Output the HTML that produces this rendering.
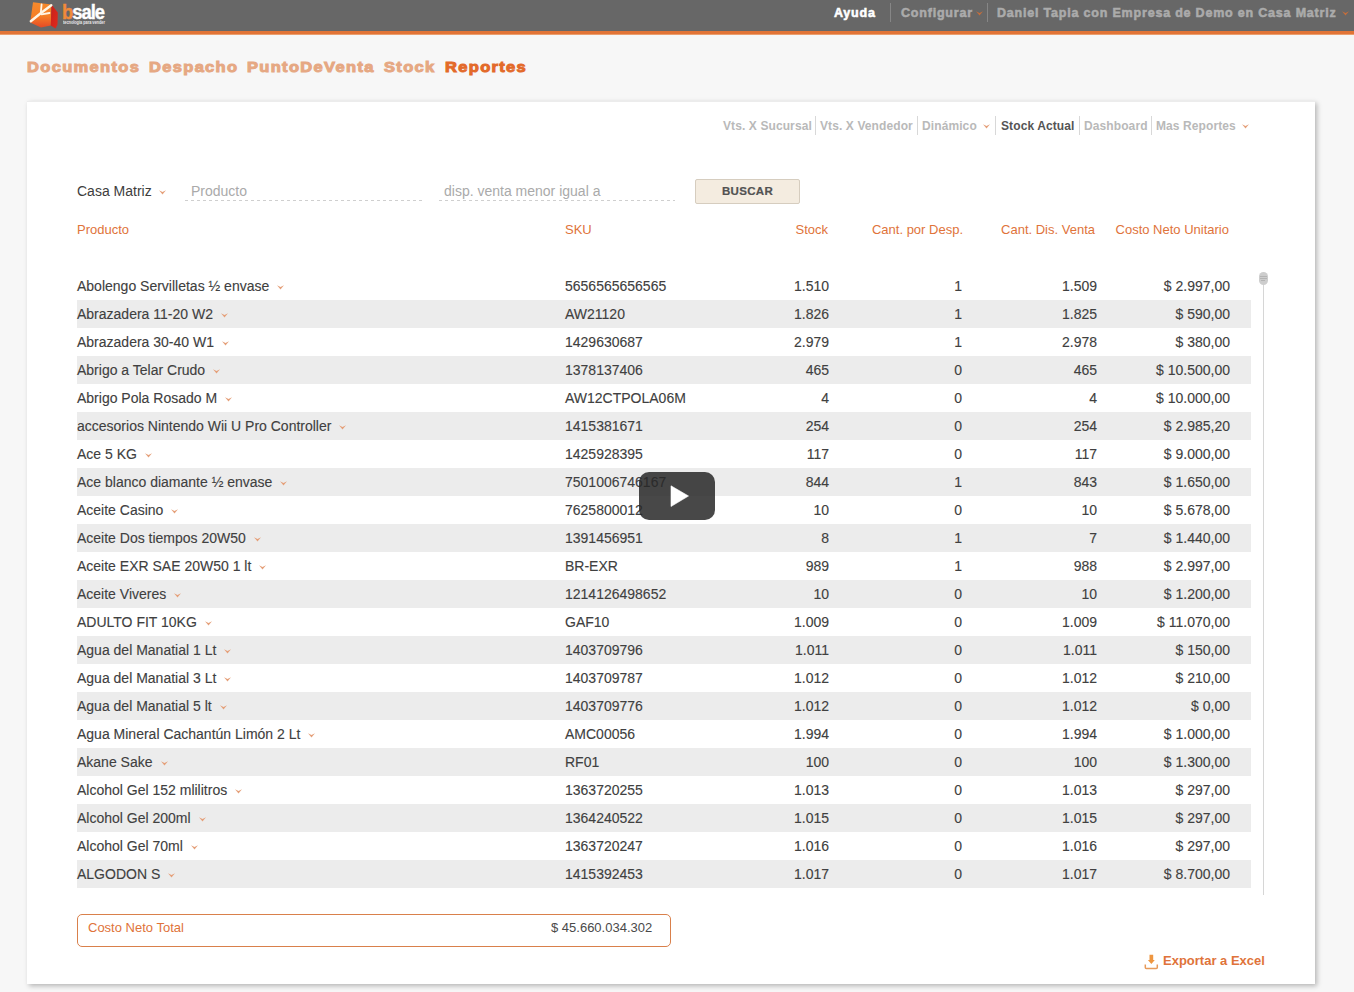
<!DOCTYPE html>
<html><head><meta charset="utf-8">
<style>
*{margin:0;padding:0;box-sizing:border-box}
html,body{width:1354px;height:992px;overflow:hidden}
body{background:#f7f7f7;font-family:"Liberation Sans",sans-serif;position:relative;color:#333}
.abs{position:absolute;white-space:nowrap}
.hdr{position:absolute;left:0;top:0;width:1354px;height:31px;background:#676767}
.hline{position:absolute;left:0;top:31px;width:1354px;height:4px;background:linear-gradient(#e27436 0,#e27436 75%,#f3c8a8 100%)}
.topnav{position:absolute;top:5.8px;font-weight:bold;font-size:12.5px;color:#ababab;white-space:nowrap;letter-spacing:0.8px;-webkit-text-stroke:0.55px currentColor}
.sep{position:absolute;top:3px;width:1px;height:19px;background:#868686}
.mn{position:absolute;top:57.8px;font-weight:bold;font-size:15px;color:#e6a883;white-space:nowrap;letter-spacing:1.2px;-webkit-text-stroke:1px currentColor;transform:scaleX(1.1);transform-origin:0 0}
.card{position:absolute;left:27px;top:101px;width:1288px;height:883px;background:#fff;box-shadow:2px 2px 5px rgba(0,0,0,0.27);border-top:1px solid #ececec}
.sub{position:absolute;top:119px;font-size:12px;font-weight:bold;color:#b9b9b9;white-space:nowrap;letter-spacing:0.1px}
.ssep{position:absolute;top:116px;width:1px;height:19px;background:#d8d8d8}
.row{position:absolute;left:77px;width:1174px;height:28px;font-size:14px;color:#404040;-webkit-text-stroke:0.12px #404040}
.row.g{background:#ececec}
.row span{position:absolute;top:6px;white-space:nowrap}
.c1{left:0}
.c2{left:488px}
.c3{right:422px}
.c4{right:289px}
.c5{right:154px}
.c6{right:21px}
.cv{margin-left:8px;vertical-align:middle}
.th{position:absolute;top:222px;font-size:13px;color:#e0733a;white-space:nowrap}
.dash{position:absolute;height:1px;background:repeating-linear-gradient(90deg,#cfcfcf 0,#cfcfcf 3px,transparent 3px,transparent 6px)}
</style></head><body>
<div class="hdr"></div><div class="hline"></div>
<!-- logo -->
<svg class="abs" style="left:28px;top:0px" width="32" height="31" viewBox="28 0 32 31">
<defs><linearGradient id="lg1" x1="0" y1="0" x2="0" y2="1"><stop offset="0" stop-color="#f68a2c"/><stop offset="0.55" stop-color="#f57e26"/><stop offset="1" stop-color="#e44a26"/></linearGradient>
<linearGradient id="lg2" x1="0" y1="0" x2="1" y2="1"><stop offset="0" stop-color="#c8201a"/><stop offset="1" stop-color="#e02a1c"/></linearGradient></defs>
<polygon points="33,2.2 51.5,4.5 50.8,25.5 41,27.5 30.2,22.5" fill="url(#lg1)"/>
<polygon points="51.5,4.5 57.8,12.5 57.5,24.5 55.5,28.5 50.8,25.5" fill="url(#lg2)"/>
<path d="M30.8 21.2 L41 13 L51.3 5.2" stroke="#fff6e6" stroke-width="2.4" fill="none" stroke-linecap="round"/>
<path d="M40.8 13 L41.6 4.3 M41.5 14.3 L49.5 13" stroke="#fff6e6" stroke-width="1.8" fill="none" stroke-linecap="round"/>
</svg>
<div class="abs" style="left:62px;top:0.5px;font-size:20px;font-weight:bold;letter-spacing:-1.1px;color:#fff;transform:scaleX(0.92);transform-origin:0 0;-webkit-text-stroke:0.4px currentColor"><span style="color:#f08a3a">b</span>sale</div>
<div class="abs" style="left:63px;top:20.3px;font-size:4.5px;color:#e8e8e8;letter-spacing:-0.05px;font-weight:bold;transform:scaleX(0.87);transform-origin:0 0">tecnologia para vender</div>

<div class="topnav" style="left:834px;color:#fff">Ayuda</div>
<div class="sep" style="left:890px"></div>
<div class="topnav" style="left:901px">Configurar</div>
<svg class="abs" style="left:976px;top:11px" width="7" height="5" viewBox="0 0 7 5"><path d="M0 0.3 L3.5 2 L7 0.3 L3.5 4.5 Z" fill="#c26d3c"/></svg>
<div class="sep" style="left:987px"></div>
<div class="topnav" style="left:997px">Daniel Tapia con Empresa de Demo en Casa Matriz</div>
<svg class="abs" style="left:1342px;top:11px" width="7" height="5" viewBox="0 0 7 5"><path d="M0 0.3 L3.5 2 L7 0.3 L3.5 4.5 Z" fill="#c26d3c"/></svg>

<div class="mn" style="left:27px">Documentos</div>
<div class="mn" style="left:149px">Despacho</div>
<div class="mn" style="left:247px">PuntoDeVenta</div>
<div class="mn" style="left:384px">Stock</div>
<div class="mn" style="left:445px;color:#e36a2a">Reportes</div>

<div class="card"></div>
<div class="sub" style="left:723px">Vts. X Sucursal</div>
<div class="ssep" style="left:815px"></div>
<div class="sub" style="left:820px">Vts. X Vendedor</div>
<div class="ssep" style="left:917px"></div>
<div class="sub" style="left:922px">Dinámico</div>
<svg class="abs" style="left:983px;top:124px" width="7" height="5" viewBox="0 0 7 5"><path d="M0 0.3 L3.5 2 L7 0.3 L3.5 4.5 Z" fill="#e5a07a"/></svg>
<div class="ssep" style="left:995px"></div>
<div class="sub" style="left:1001px;color:#555">Stock Actual</div>
<div class="ssep" style="left:1079px"></div>
<div class="sub" style="left:1084px">Dashboard</div>
<div class="ssep" style="left:1151px"></div>
<div class="sub" style="left:1156px">Mas Reportes</div>
<svg class="abs" style="left:1242px;top:124px" width="7" height="5" viewBox="0 0 7 5"><path d="M0 0.3 L3.5 2 L7 0.3 L3.5 4.5 Z" fill="#e5a07a"/></svg>

<div class="abs" style="left:77px;top:183px;font-size:14px;color:#3d3d3d">Casa Matriz</div>
<svg class="abs" style="left:159px;top:190px" width="7" height="5" viewBox="0 0 7 5"><path d="M0 0.3 L3.5 2 L7 0.3 L3.5 4.5 Z" fill="#e5a07a"/></svg>
<div class="abs" style="left:191px;top:183px;font-size:14px;color:#aaa">Producto</div>
<div class="dash" style="left:185px;top:200px;width:238px"></div>
<div class="abs" style="left:444px;top:183px;font-size:14px;color:#aaa">disp. venta menor igual a</div>
<div class="dash" style="left:439px;top:200px;width:236px"></div>
<div class="abs" style="left:695px;top:179px;width:105px;height:25px;background:#f4ece0;border:1px solid #d6cdbf;border-radius:2px;font-size:11.5px;font-weight:bold;color:#525252;text-align:center;line-height:23px;letter-spacing:0.3px;-webkit-text-stroke:0.2px currentColor">BUSCAR</div>

<div class="th" style="left:77px">Producto</div>
<div class="th" style="left:565px">SKU</div>
<div class="th" style="right:526px">Stock</div>
<div class="th" style="right:391px">Cant. por Desp.</div>
<div class="th" style="right:259px">Cant. Dis. Venta</div>
<div class="th" style="right:125px">Costo Neto Unitario</div>
<div class="row" style="top:272px"><span class="c1">Abolengo Servilletas ½ envase<svg class="cv" width="7" height="5" viewBox="0 0 7 5"><path d="M0 0.3 L3.5 2 L7 0.3 L3.5 4.5 Z" fill="#e5a07a"/></svg></span><span class="c2">5656565656565</span><span class="c3">1.510</span><span class="c4">1</span><span class="c5">1.509</span><span class="c6">$ 2.997,00</span></div>
<div class="row g" style="top:300px"><span class="c1">Abrazadera 11-20 W2<svg class="cv" width="7" height="5" viewBox="0 0 7 5"><path d="M0 0.3 L3.5 2 L7 0.3 L3.5 4.5 Z" fill="#e5a07a"/></svg></span><span class="c2">AW21120</span><span class="c3">1.826</span><span class="c4">1</span><span class="c5">1.825</span><span class="c6">$ 590,00</span></div>
<div class="row" style="top:328px"><span class="c1">Abrazadera 30-40 W1<svg class="cv" width="7" height="5" viewBox="0 0 7 5"><path d="M0 0.3 L3.5 2 L7 0.3 L3.5 4.5 Z" fill="#e5a07a"/></svg></span><span class="c2">1429630687</span><span class="c3">2.979</span><span class="c4">1</span><span class="c5">2.978</span><span class="c6">$ 380,00</span></div>
<div class="row g" style="top:356px"><span class="c1">Abrigo a Telar Crudo<svg class="cv" width="7" height="5" viewBox="0 0 7 5"><path d="M0 0.3 L3.5 2 L7 0.3 L3.5 4.5 Z" fill="#e5a07a"/></svg></span><span class="c2">1378137406</span><span class="c3">465</span><span class="c4">0</span><span class="c5">465</span><span class="c6">$ 10.500,00</span></div>
<div class="row" style="top:384px"><span class="c1">Abrigo Pola Rosado M<svg class="cv" width="7" height="5" viewBox="0 0 7 5"><path d="M0 0.3 L3.5 2 L7 0.3 L3.5 4.5 Z" fill="#e5a07a"/></svg></span><span class="c2">AW12CTPOLA06M</span><span class="c3">4</span><span class="c4">0</span><span class="c5">4</span><span class="c6">$ 10.000,00</span></div>
<div class="row g" style="top:412px"><span class="c1">accesorios Nintendo Wii U Pro Controller<svg class="cv" width="7" height="5" viewBox="0 0 7 5"><path d="M0 0.3 L3.5 2 L7 0.3 L3.5 4.5 Z" fill="#e5a07a"/></svg></span><span class="c2">1415381671</span><span class="c3">254</span><span class="c4">0</span><span class="c5">254</span><span class="c6">$ 2.985,20</span></div>
<div class="row" style="top:440px"><span class="c1">Ace 5 KG<svg class="cv" width="7" height="5" viewBox="0 0 7 5"><path d="M0 0.3 L3.5 2 L7 0.3 L3.5 4.5 Z" fill="#e5a07a"/></svg></span><span class="c2">1425928395</span><span class="c3">117</span><span class="c4">0</span><span class="c5">117</span><span class="c6">$ 9.000,00</span></div>
<div class="row g" style="top:468px"><span class="c1">Ace blanco diamante ½ envase<svg class="cv" width="7" height="5" viewBox="0 0 7 5"><path d="M0 0.3 L3.5 2 L7 0.3 L3.5 4.5 Z" fill="#e5a07a"/></svg></span><span class="c2">7501006746167</span><span class="c3">844</span><span class="c4">1</span><span class="c5">843</span><span class="c6">$ 1.650,00</span></div>
<div class="row" style="top:496px"><span class="c1">Aceite Casino<svg class="cv" width="7" height="5" viewBox="0 0 7 5"><path d="M0 0.3 L3.5 2 L7 0.3 L3.5 4.5 Z" fill="#e5a07a"/></svg></span><span class="c2">7625800012</span><span class="c3">10</span><span class="c4">0</span><span class="c5">10</span><span class="c6">$ 5.678,00</span></div>
<div class="row g" style="top:524px"><span class="c1">Aceite Dos tiempos 20W50<svg class="cv" width="7" height="5" viewBox="0 0 7 5"><path d="M0 0.3 L3.5 2 L7 0.3 L3.5 4.5 Z" fill="#e5a07a"/></svg></span><span class="c2">1391456951</span><span class="c3">8</span><span class="c4">1</span><span class="c5">7</span><span class="c6">$ 1.440,00</span></div>
<div class="row" style="top:552px"><span class="c1">Aceite EXR SAE 20W50 1 lt<svg class="cv" width="7" height="5" viewBox="0 0 7 5"><path d="M0 0.3 L3.5 2 L7 0.3 L3.5 4.5 Z" fill="#e5a07a"/></svg></span><span class="c2">BR-EXR</span><span class="c3">989</span><span class="c4">1</span><span class="c5">988</span><span class="c6">$ 2.997,00</span></div>
<div class="row g" style="top:580px"><span class="c1">Aceite Viveres<svg class="cv" width="7" height="5" viewBox="0 0 7 5"><path d="M0 0.3 L3.5 2 L7 0.3 L3.5 4.5 Z" fill="#e5a07a"/></svg></span><span class="c2">1214126498652</span><span class="c3">10</span><span class="c4">0</span><span class="c5">10</span><span class="c6">$ 1.200,00</span></div>
<div class="row" style="top:608px"><span class="c1">ADULTO FIT 10KG<svg class="cv" width="7" height="5" viewBox="0 0 7 5"><path d="M0 0.3 L3.5 2 L7 0.3 L3.5 4.5 Z" fill="#e5a07a"/></svg></span><span class="c2">GAF10</span><span class="c3">1.009</span><span class="c4">0</span><span class="c5">1.009</span><span class="c6">$ 11.070,00</span></div>
<div class="row g" style="top:636px"><span class="c1">Agua del Manatial 1 Lt<svg class="cv" width="7" height="5" viewBox="0 0 7 5"><path d="M0 0.3 L3.5 2 L7 0.3 L3.5 4.5 Z" fill="#e5a07a"/></svg></span><span class="c2">1403709796</span><span class="c3">1.011</span><span class="c4">0</span><span class="c5">1.011</span><span class="c6">$ 150,00</span></div>
<div class="row" style="top:664px"><span class="c1">Agua del Manatial 3 Lt<svg class="cv" width="7" height="5" viewBox="0 0 7 5"><path d="M0 0.3 L3.5 2 L7 0.3 L3.5 4.5 Z" fill="#e5a07a"/></svg></span><span class="c2">1403709787</span><span class="c3">1.012</span><span class="c4">0</span><span class="c5">1.012</span><span class="c6">$ 210,00</span></div>
<div class="row g" style="top:692px"><span class="c1">Agua del Manatial 5 lt<svg class="cv" width="7" height="5" viewBox="0 0 7 5"><path d="M0 0.3 L3.5 2 L7 0.3 L3.5 4.5 Z" fill="#e5a07a"/></svg></span><span class="c2">1403709776</span><span class="c3">1.012</span><span class="c4">0</span><span class="c5">1.012</span><span class="c6">$ 0,00</span></div>
<div class="row" style="top:720px"><span class="c1">Agua Mineral Cachantún Limón 2 Lt<svg class="cv" width="7" height="5" viewBox="0 0 7 5"><path d="M0 0.3 L3.5 2 L7 0.3 L3.5 4.5 Z" fill="#e5a07a"/></svg></span><span class="c2">AMC00056</span><span class="c3">1.994</span><span class="c4">0</span><span class="c5">1.994</span><span class="c6">$ 1.000,00</span></div>
<div class="row g" style="top:748px"><span class="c1">Akane Sake<svg class="cv" width="7" height="5" viewBox="0 0 7 5"><path d="M0 0.3 L3.5 2 L7 0.3 L3.5 4.5 Z" fill="#e5a07a"/></svg></span><span class="c2">RF01</span><span class="c3">100</span><span class="c4">0</span><span class="c5">100</span><span class="c6">$ 1.300,00</span></div>
<div class="row" style="top:776px"><span class="c1">Alcohol Gel 152 mlilitros<svg class="cv" width="7" height="5" viewBox="0 0 7 5"><path d="M0 0.3 L3.5 2 L7 0.3 L3.5 4.5 Z" fill="#e5a07a"/></svg></span><span class="c2">1363720255</span><span class="c3">1.013</span><span class="c4">0</span><span class="c5">1.013</span><span class="c6">$ 297,00</span></div>
<div class="row g" style="top:804px"><span class="c1">Alcohol Gel 200ml<svg class="cv" width="7" height="5" viewBox="0 0 7 5"><path d="M0 0.3 L3.5 2 L7 0.3 L3.5 4.5 Z" fill="#e5a07a"/></svg></span><span class="c2">1364240522</span><span class="c3">1.015</span><span class="c4">0</span><span class="c5">1.015</span><span class="c6">$ 297,00</span></div>
<div class="row" style="top:832px"><span class="c1">Alcohol Gel 70ml<svg class="cv" width="7" height="5" viewBox="0 0 7 5"><path d="M0 0.3 L3.5 2 L7 0.3 L3.5 4.5 Z" fill="#e5a07a"/></svg></span><span class="c2">1363720247</span><span class="c3">1.016</span><span class="c4">0</span><span class="c5">1.016</span><span class="c6">$ 297,00</span></div>
<div class="row g" style="top:860px"><span class="c1">ALGODON S<svg class="cv" width="7" height="5" viewBox="0 0 7 5"><path d="M0 0.3 L3.5 2 L7 0.3 L3.5 4.5 Z" fill="#e5a07a"/></svg></span><span class="c2">1415392453</span><span class="c3">1.017</span><span class="c4">0</span><span class="c5">1.017</span><span class="c6">$ 8.700,00</span></div>
<!-- scrollbar -->
<div class="abs" style="left:1263px;top:280px;width:1px;height:615px;background:#d6d6d6"></div>
<div class="abs" style="left:1259px;top:272px;width:9px;height:13px;background:#cdcdcd;border-radius:4.5px"></div>
<div class="abs" style="left:1260px;top:276px;width:7px;height:1px;background:#b4b4b4"></div>
<div class="abs" style="left:1260px;top:278px;width:7px;height:1px;background:#b4b4b4"></div>
<div class="abs" style="left:1261px;top:280px;width:4px;height:1px;background:#b4b4b4"></div>

<!-- play -->
<div class="abs" style="left:639px;top:472px;width:76px;height:48px;background:rgba(40,40,40,0.85);border-radius:10px"></div>
<svg class="abs" style="left:670px;top:485px" width="20" height="23" viewBox="0 0 20 23"><polygon points="1,0.8 18.5,11 1,21.5" fill="#fff" stroke="#fff" stroke-width="0.6" stroke-linejoin="round"/></svg>

<div class="abs" style="left:77px;top:914px;width:594px;height:33px;border:1px solid #d9804b;border-radius:5px"></div>
<div class="abs" style="left:88px;top:920px;font-size:13px;color:#e0733a">Costo Neto Total</div>
<div class="abs" style="left:551px;top:920px;font-size:13px;color:#4a4a4a">$ 45.660.034.302</div>
<svg class="abs" style="left:1143px;top:953px" width="16" height="17" viewBox="0 0 16 17"><path d="M6.5 1.8 H10.2 V7 H11.8 L8.35 11 L4.9 7 H6.5 Z" fill="#ee9640"/><path d="M2.3 11.5 V14.5 Q2.3 15.5 3.3 15.5 H13.3 Q14.3 15.5 14.3 14.5 V11.5" stroke="#e79a5a" stroke-width="1.5" fill="none"/></svg>
<div class="abs" style="left:1163px;top:953.3px;font-size:13px;font-weight:bold;color:#e0733a">Exportar a Excel</div>
</body></html>
